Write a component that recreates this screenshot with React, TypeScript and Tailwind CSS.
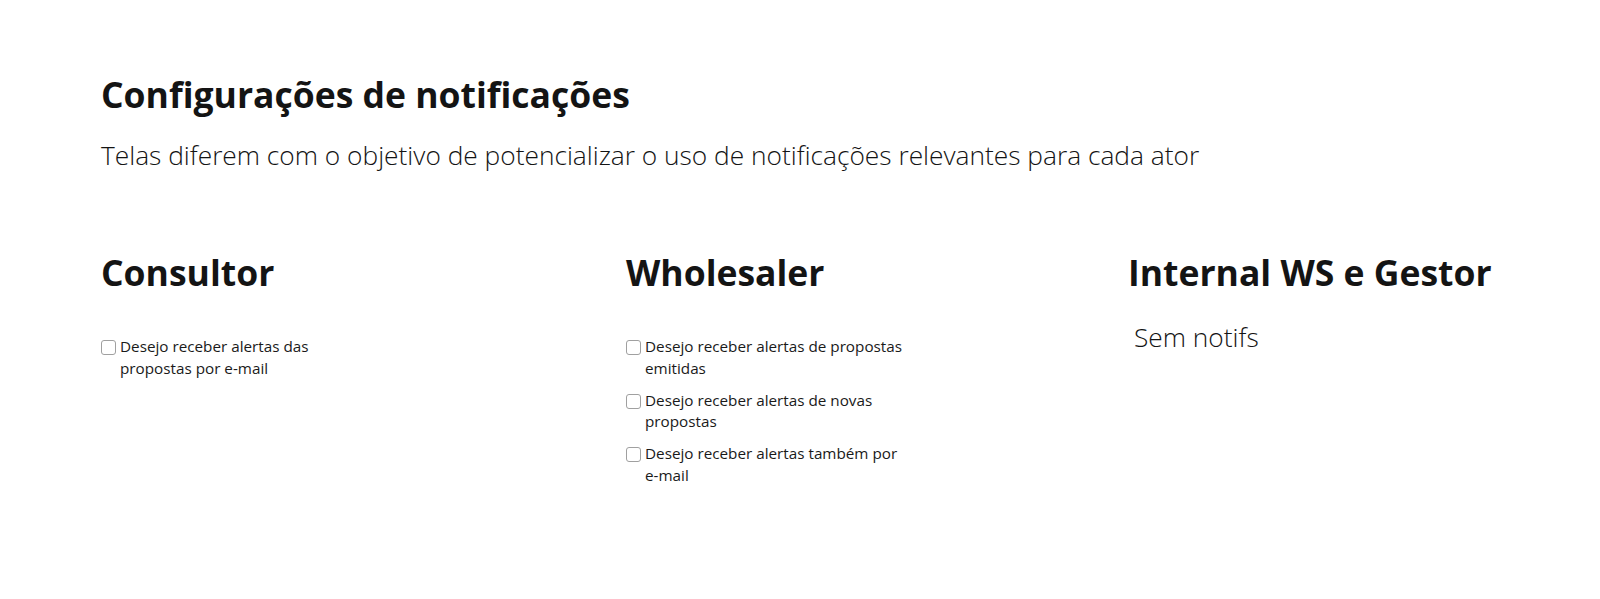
import React from 'react'

const consultorOpts = ['Desejo receber alertas das propostas por e-mail']

const wholesalerOpts = [
  'Desejo receber alertas de propostas emitidas',
  'Desejo receber alertas de novas propostas',
  'Desejo receber alertas também por e-mail',
]

function Check({ label }: { label: string }) {
  return (
    <label className="flex items-start gap-[4px] text-[15.25px] leading-[21.5px] text-[#1a1a1a]">
      <input
        type="checkbox"
        className="mt-[4px] size-[15px] shrink-0 appearance-none rounded-[3px] border border-[#a0a0a0] bg-white"
      />
      <span>{label}</span>
    </label>
  )
}

export default function App() {
  return (
    <div className="min-h-[599px] w-full bg-white px-[101px] pt-[70px] text-[#141414]" style={{ fontFamily: '"Open Sans", sans-serif' }}>
      <h1 className="text-[35.5px] font-bold leading-[48px]">Configurações de notificações</h1>
      <p className="mt-[19px] text-[26.3px] font-light leading-[36px]">
        Telas diferem com o objetivo de potencializar o uso de notificações relevantes para cada ator
      </p>

      <div className="mt-[75px] flex">
        <section className="w-[525px] shrink-0">
          <h2 className="text-[35.5px] font-bold leading-[48px]">Consultor</h2>
          <div className="mt-[40px] flex w-[220px] flex-col gap-[10.5px]">
            {consultorOpts.map((o) => (
              <Check key={o} label={o} />
            ))}
          </div>
        </section>

        <section className="w-[502px] shrink-0">
          <h2 className="text-[35.5px] font-bold leading-[48px]">Wholesaler</h2>
          <div className="mt-[40px] flex w-[280px] flex-col gap-[10.5px]">
            {wholesalerOpts.map((o) => (
              <Check key={o} label={o} />
            ))}
          </div>
        </section>

        <section className="shrink-0">
          <h2 className="whitespace-nowrap text-[35.5px] font-bold leading-[48px]">Internal WS e Gestor</h2>
          <p className="mt-[23px] pl-[6px] text-[26.3px] font-light leading-[36px]">Sem notifs</p>
        </section>
      </div>
    </div>
  )
}
